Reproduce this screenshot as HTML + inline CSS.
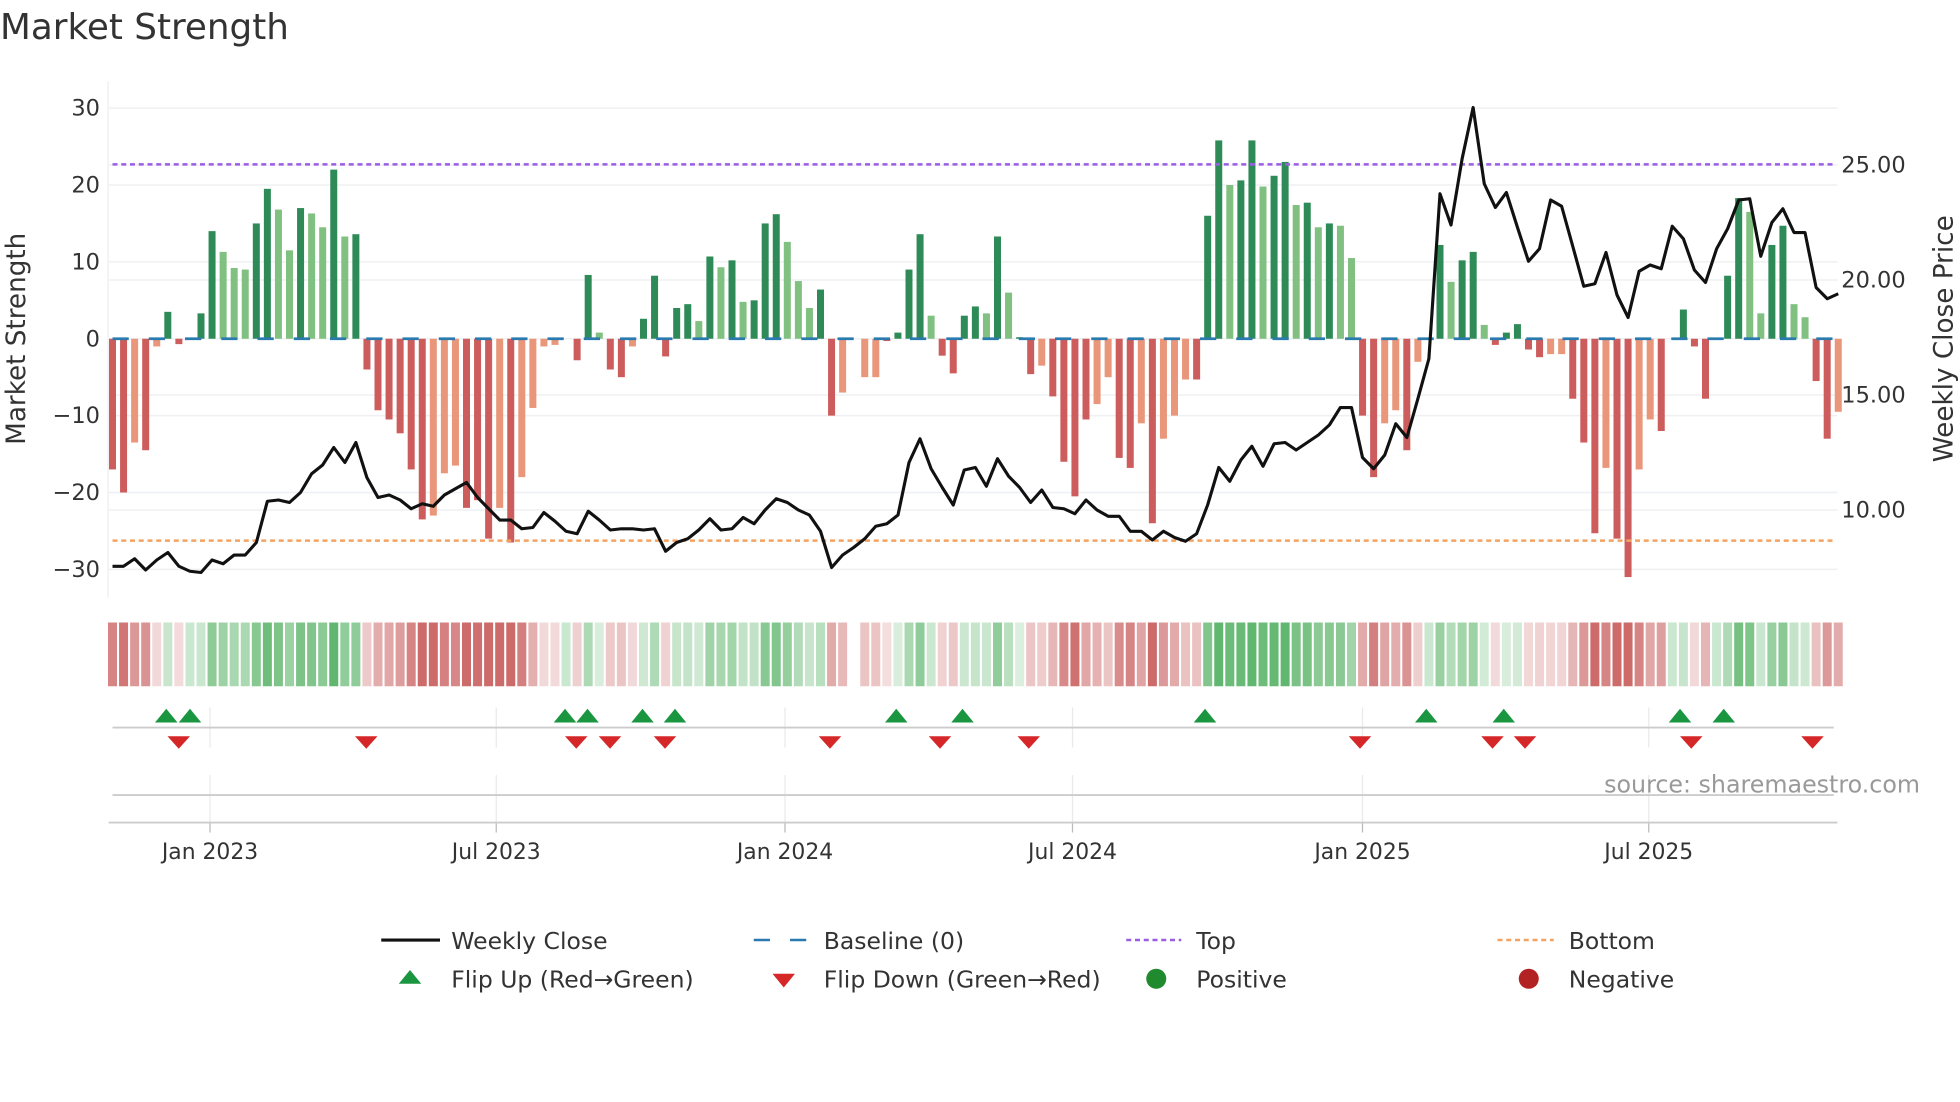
<!DOCTYPE html>
<html><head><meta charset="utf-8"><style>
html,body{margin:0;padding:0;background:#fff;width:1960px;height:1102px;overflow:hidden}
svg{display:block}
text{font-family:"DejaVu Sans","Liberation Sans",sans-serif;fill:#333}
</style></head><body>
<svg id="s" width="1960" height="1102" viewBox="0 0 1568 881.6" xmlns="http://www.w3.org/2000/svg">
<rect width="1568" height="882" fill="#fff"/>
<text x="0" y="31" font-size="28.6" fill="#333">Market Strength</text>
<g id="grid"></g>
<g id="bars"></g>
<g id="over"></g>
<text x="20" y="271" font-size="21" transform="rotate(-90 20 271)" text-anchor="middle">Market Strength</text>
<text x="1562" y="271" font-size="21" transform="rotate(-90 1562 271)" text-anchor="middle">Weekly Close Price</text>
<text x="1536" y="634" font-size="19" text-anchor="end" style="fill:#999">source: sharemaestro.com</text>
<g font-size="18.8">
<line x1="305" y1="752" x2="352" y2="752" stroke="#111" stroke-width="2.5"/>
<text x="361" y="759">Weekly Close</text>
<line x1="603" y1="752" x2="646" y2="752" stroke="#2a7ab0" stroke-width="2" stroke-dasharray="13 16"/>
<text x="659" y="759">Baseline (0)</text>
<line x1="901" y1="752" x2="945" y2="752" stroke="#9b5de5" stroke-width="2" stroke-dasharray="4 3"/>
<text x="957" y="759">Top</text>
<line x1="1198" y1="752" x2="1243" y2="752" stroke="#f4a261" stroke-width="2" stroke-dasharray="4 3"/>
<text x="1255" y="759">Bottom</text>
<polygon points="319,787 337,787 328,776" fill="#1a9641"/>
<text x="361" y="790">Flip Up (Red→Green)</text>
<polygon points="618,779 636,779 627,790" fill="#d62728"/>
<text x="659" y="790">Flip Down (Green→Red)</text>
<circle cx="925" cy="783" r="8" fill="#1f8a2e"/>
<text x="957" y="790">Positive</text>
<circle cx="1223" cy="783" r="8" fill="#b22222"/>
<text x="1255" y="790">Negative</text>
</g>
</svg>
<script>
var NS="http://www.w3.org/2000/svg";
function el(p,t,a,txt){var e=document.createElementNS(NS,t);for(var k in a)e.setAttribute(k,a[k]);if(txt!=null)e.textContent=txt;document.getElementById(p).appendChild(e);return e;}
var v=[-17,-20,-13.5,-14.5,-1,3.5,-0.7,0,3.3,14,11.3,9.2,9,15,19.5,16.8,11.5,17,16.3,14.5,22,13.3,13.6,-4,-9.3,-10.5,-12.3,-17,-23.5,-23,-17.5,-16.5,-22,-21,-26,-22,-26.5,-18,-9,-1,-0.8,0,-2.8,8.3,0.8,-4,-5,-1,2.6,8.2,-2.3,4,4.5,2.3,10.7,9.3,10.2,4.8,5,15,16.2,12.6,7.5,4,6.4,-10,-7,0,-5,-5,-0.3,0.8,9,13.6,3,-2.2,-4.5,3,4.2,3.3,13.3,6,0.2,-4.6,-3.5,-7.5,-16,-20.5,-10.5,-8.5,-5,-15.5,-16.8,-11,-24,-13,-10,-5.3,-5.3,16,25.8,20,20.6,25.8,19.8,21.2,23,17.4,17.7,14.5,15,14.7,10.5,-10,-18,-11,-9.3,-14.5,-3,0,12.2,7.4,10.2,11.3,1.8,-0.8,0.8,1.9,-1.4,-2.4,-2,-2,-7.8,-13.5,-25.3,-16.8,-26,-31,-17,-10.5,-12,0,3.8,-1,-7.8,0,8.2,18.3,16.5,3.3,12.2,14.7,4.5,2.8,-5.5,-13,-9.5];
var light={2:1,4:1,10:1,11:1,12:1,15:1,16:1,18:1,19:1,21:1,29:1,30:1,31:1,35:1,37:1,38:1,39:1,40:1,44:1,47:1,53:1,55:1,57:1,61:1,62:1,63:1,66:1,68:1,69:1,74:1,79:1,81:1,84:1,89:1,90:1,93:1,95:1,96:1,97:1,101:1,104:1,107:1,109:1,111:1,112:1,115:1,116:1,118:1,121:1,124:1,130:1,131:1,135:1,138:1,139:1,148:1,149:1,152:1,153:1,156:1};
var py=[453,453,447,456,448,442,453,457,458,448,451,444,444,434,401,400,402,394,379,372,358,370,354,382,398,396,400,407,403,405,396,391,386,398,407,416,416,423,422,410,417,425,427,409,416,424,423,423,424,423,441,434,431,424,415,424,423,414,419,408,399,402,408,412,425,454,444,438,431,421,419,412,370,351,375,390,404,376,374,389,367,381,390,402,392,406,407,411,400,408,413,413,425,425,432,425,430,433,427,404,374,385,368,357,373,355,354,360,354,348,340,326,326,366,375,364,339,350,319,287,155,180,127,86,147,166,154,182,209,199,160,165,197,229,227,202,236,254,217,212,215,181,191,216,226,199,183,160,159,205,178,167,186,186,230,239,235];
function X(i){return 90+8.85*i}
function Y(val){return 271-val*6.15}
[30,20,10,0,-10,-20,-30].forEach(function(t){el("grid","line",{x1:87,x2:1470,y1:Y(t),y2:Y(t),stroke:"#eef0f3","stroke-width":1.2});el("grid","text",{x:80,y:Y(t)+6,"font-size":18,"text-anchor":"end"},t<0?"\u2212"+(-t):""+t);});
[25,20,15,10].forEach(function(p){var y=132+(25-p)*18.4;el("grid","line",{x1:87,x2:1470,y1:y,y2:y,stroke:"#eef0f3","stroke-width":1.2});el("grid","text",{x:1473,y:y+6,"font-size":18},p.toFixed(2));});
el("grid","line",{x1:86.5,x2:86.5,y1:65,y2:478,stroke:"#eef0f3","stroke-width":1.2});
var xt=[[168,"Jan 2023"],[397,"Jul 2023"],[628,"Jan 2024"],[858,"Jul 2024"],[1090,"Jan 2025"],[1319,"Jul 2025"]];
xt.forEach(function(a){el("grid","line",{x1:a[0],x2:a[0],y1:566,y2:598,stroke:"#e8eaee","stroke-width":1});el("grid","line",{x1:a[0],x2:a[0],y1:620,y2:658,stroke:"#e8eaee","stroke-width":1});el("grid","line",{x1:a[0],x2:a[0],y1:658,y2:666,stroke:"#bbb","stroke-width":1});el("grid","text",{x:a[0],y:687,"font-size":17.5,"text-anchor":"middle"},a[1]);});
el("grid","line",{x1:90,x2:1467,y1:582,y2:582,stroke:"#ccc","stroke-width":1.5});
el("grid","line",{x1:90,x2:1467,y1:636,y2:636,stroke:"#ccc","stroke-width":1.5});
el("grid","line",{x1:87,x2:1470,y1:658,y2:658,stroke:"#ccc","stroke-width":1.5});
for(var i=0;i<v.length;i++){var val=v[i];
if(i!==67){var a=Math.min(1,0.22+Math.abs(val)/28);var col=val>=0?"rgba(80,175,95,"+(a*0.9)+")":"rgba(200,90,90,"+(a*0.9)+")";if(val===0)col="rgba(80,175,95,0.3)";el("bars","rect",{x:X(i)-3.6,y:498,width:7.2,height:51,fill:col});}
if(val===0)continue;
var c=val>0?(light[i]?"#80c080":"#2e8b57"):(light[i]?"#e9967a":"#cd5c5c");var y0=Y(0),y1=Y(val);el("bars","rect",{x:X(i)-2.8,y:Math.min(y0,y1),width:5.6,height:Math.abs(y1-y0),fill:c});}
el("over","line",{x1:90,x2:1467,y1:Y(0),y2:Y(0),stroke:"#2a7ab0","stroke-width":2.2,"stroke-dasharray":"13 16"});
el("over","line",{x1:90,x2:1467,y1:131.5,y2:131.5,stroke:"#9b5de5","stroke-width":2,"stroke-dasharray":"4 3"});
el("over","line",{x1:90,x2:1467,y1:432.5,y2:432.5,stroke:"#f4a261","stroke-width":2,"stroke-dasharray":"4 3"});
var d="";for(i=0;i<py.length;i++)d+=(i?"L":"M")+X(i).toFixed(1)+" "+py[i]+" ";
el("over","path",{d:d,fill:"none",stroke:"#111","stroke-width":2.5,"stroke-linejoin":"round"});
[133,152,452,470,514,540,717,770,964,1141,1203,1344,1379].forEach(function(x){el("over","polygon",{points:(x-9)+",578 "+(x+9)+",578 "+x+",567",fill:"#1a9641"});});
[143,293,461,488,532,664,752,823,1088,1194,1220,1353,1450].forEach(function(x){el("over","polygon",{points:(x-9)+",589 "+(x+9)+",589 "+x+",599",fill:"#d62728"});});
</script>
</body></html>
